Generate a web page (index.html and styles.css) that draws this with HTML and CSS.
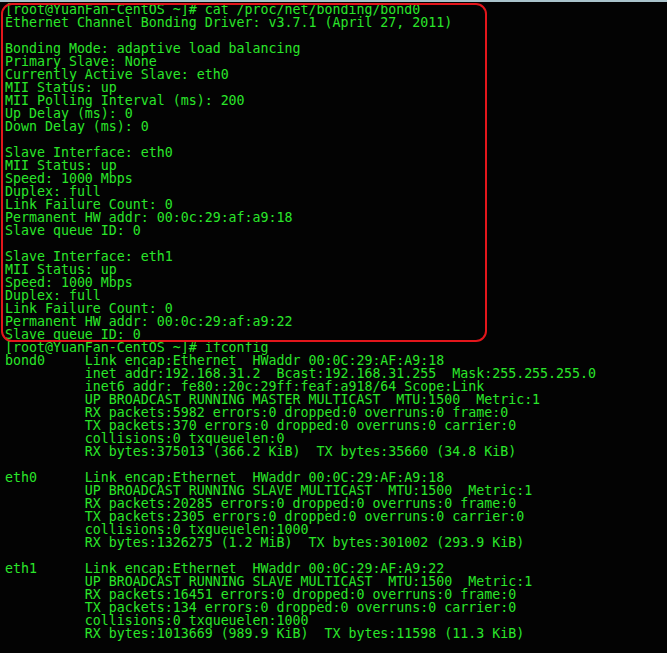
FILE: index.html
```html
<!DOCTYPE html>
<html>
<head>
<meta charset="utf-8">
<link rel="stylesheet" href="styles.css">
</head>
<body>
<div class="term">
<div class="topbar"></div>
<pre class="out">[root@YuanFan-CentOS ~]# cat /proc/net/bonding/bond0
Ethernet Channel Bonding Driver: v3.7.1 (April 27, 2011)

Bonding Mode: adaptive load balancing
Primary Slave: None
Currently Active Slave: eth0
MII Status: up
MII Polling Interval (ms): 200
Up Delay (ms): 0
Down Delay (ms): 0

Slave Interface: eth0
MII Status: up
Speed: 1000 Mbps
Duplex: full
Link Failure Count: 0
Permanent HW addr: 00:0c:29:af:a9:18
Slave queue ID: 0

Slave Interface: eth1
MII Status: up
Speed: 1000 Mbps
Duplex: full
Link Failure Count: 0
Permanent HW addr: 00:0c:29:af:a9:22
Slave queue ID: 0
[root@YuanFan-CentOS ~]# ifconfig
bond0     Link encap:Ethernet  HWaddr 00:0C:29:AF:A9:18
          inet addr:192.168.31.2  Bcast:192.168.31.255  Mask:255.255.255.0
          inet6 addr: fe80::20c:29ff:feaf:a918/64 Scope:Link
          UP BROADCAST RUNNING MASTER MULTICAST  MTU:1500  Metric:1
          RX packets:5982 errors:0 dropped:0 overruns:0 frame:0
          TX packets:370 errors:0 dropped:0 overruns:0 carrier:0
          collisions:0 txqueuelen:0
          RX bytes:375013 (366.2 KiB)  TX bytes:35660 (34.8 KiB)

eth0      Link encap:Ethernet  HWaddr 00:0C:29:AF:A9:18
          UP BROADCAST RUNNING SLAVE MULTICAST  MTU:1500  Metric:1
          RX packets:20285 errors:0 dropped:0 overruns:0 frame:0
          TX packets:2305 errors:0 dropped:0 overruns:0 carrier:0
          collisions:0 txqueuelen:1000
          RX bytes:1326275 (1.2 MiB)  TX bytes:301002 (293.9 KiB)

eth1      Link encap:Ethernet  HWaddr 00:0C:29:AF:A9:22
          UP BROADCAST RUNNING SLAVE MULTICAST  MTU:1500  Metric:1
          RX packets:16451 errors:0 dropped:0 overruns:0 frame:0
          TX packets:134 errors:0 dropped:0 overruns:0 carrier:0
          collisions:0 txqueuelen:1000
          RX bytes:1013669 (989.9 KiB)  TX bytes:11598 (11.3 KiB)</pre>
<div class="highlight"></div>
</div>
</body>
</html>
```
FILE: styles.css
```css
html, body {
  margin: 0;
  padding: 0;
  background: #000;
}
.term {
  position: relative;
  width: 667px;
  height: 653px;
  background: #030303;
  overflow: hidden;
}
.topbar {
  height: 2px;
  background: #a9c3cb;
}
.out {
  margin: 0;
  padding: 1px 0 0 5px;
  font-family: "DejaVu Sans Mono", "Liberation Mono", monospace;
  font-size: 13.28px;
  line-height: 13px;
  color: #2ae62a;
  white-space: pre;
}
.highlight {
  position: absolute;
  left: 1px;
  top: 3px;
  width: 482px;
  height: 335px;
  border: 2px solid #e3161b;
  border-radius: 11px;
}
```
